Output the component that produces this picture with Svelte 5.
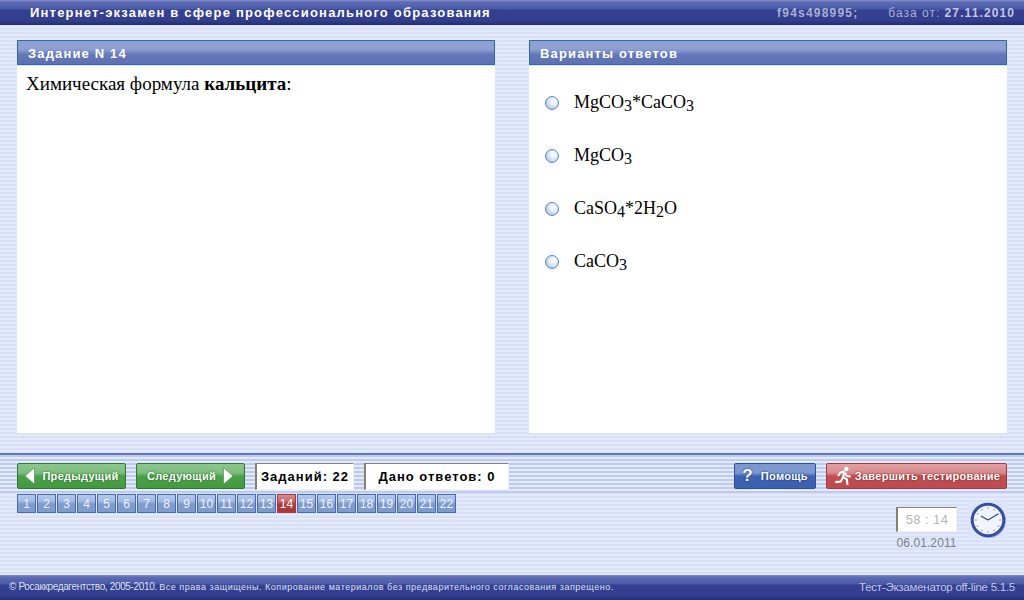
<script>
  const options = [
    [['MgCO', '3'], ['*CaCO', '3']],
    [['MgCO', '3']],
    [['CaSO', '4'], ['*2H', '2'], ['O', '']],
    [['CaCO', '3']]
  ]
  const pages = Array.from({ length: 22 }, (_, i) => i + 1)
  const current = 14
  const ticks = Array.from({ length: 12 }, (_, i) => i * 30)
</script>

<div class="page">
  <header class="topbar">
    <span class="title">Интернет-экзамен в сфере профессионального образования</span>
    <span class="session">f94s498995;</span>
    <span class="base">база от: <b>27.11.2010</b></span>
  </header>

  <main class="columns">
    <section class="card">
      <h2>Задание N 14</h2>
      <div class="body question">Химическая формула <b>кальцита</b>:</div>
    </section>
    <section class="card">
      <h2>Варианты ответов</h2>
      <ul class="body answers">
        {#each options as parts}
          <li>
            <span class="radio"></span>
            <span>{#each parts as p}{p[0]}<sub>{p[1]}</sub>{/each}</span>
          </li>
        {/each}
      </ul>
    </section>
  </main>

  <div class="divider"></div>

  <div class="toolbar">
    <button class="btn green">
      <svg width="12" height="18" viewBox="0 0 12 18"><path d="M10.500 .8v16.400L1 9z" fill="#fff" stroke="#2d7a2d" stroke-width=".5"/></svg>
      Предыдущий
    </button>
    <button class="btn green next">
      Следующий
      <svg width="12" height="18" viewBox="0 0 12 18"><path d="M1.500 .8v16.400L11 9z" fill="#fff" stroke="#2d7a2d" stroke-width=".5"/></svg>
    </button>
    <div class="count tasks">Заданий: 22</div>
    <div class="count given">Дано ответов: 0</div>
    <button class="btn blue help"><span class="q">?</span> Помощь</button>
    <button class="btn red">
      <svg width="20" height="20" viewBox="0 0 17 18">
        <circle cx="11.500" cy="2.600" r="2" fill="#fff"/>
        <path d="M10 5 6 6 4 9M10 5l-1.500 5 3.500 2 .5 5M8.500 10 6.500 14l-5 .5M10 6l2 3 3.500.5" fill="none" stroke="#fff" stroke-width="1.900"/>
      </svg>
      Завершить тестирование
    </button>
  </div>

  <div class="lower">
    <nav class="pager">
      {#each pages as n}
        <span class="cell" class:active={n === current}>{n}</span>
      {/each}
    </nav>
    <div class="clockbox">
      <div class="timewrap">
        <div class="timer">58 : 14</div>
        <div class="date">06.01.2011</div>
      </div>
      <svg class="clock" width="38" height="38" viewBox="0 0 38 38">
        <rect width="38" height="38" fill="#dce5fb"/>
        <circle cx="20" cy="20" r="17" fill="#8f9cc9" opacity=".7"/>
        <circle cx="19" cy="19" r="15.800" fill="#f1f4fc" stroke="#36509f" stroke-width="3"/>
        {#each ticks as a}
          <rect x="18.300" y="6" width="1.400" height="1.800" fill="#9db0dc" transform="rotate({a} 19 19)"/>
        {/each}
        <path d="M19 19 12 15M19 19 29 13" stroke="#2e4a94" stroke-width="1.300" fill="none"/>
      </svg>
    </div>
  </div>

  <footer class="bottombar">
    <span class="copy">© Росаккредагентство, 2005-2010. <small>Все права защищены. Копирование материалов без предварительного согласования запрещено.</small></span>
    <span class="version">Тест-Экзаменатор off-line 5.1.5</span>
  </footer>
</div>

<style>
  :global(body) {
    margin: 0;
  }

  .page {
    width: 1024px;
    height: 600px;
    display: flex;
    flex-direction: column;
    overflow: hidden;
    font-family: "Liberation Sans", Arial, sans-serif;
    background: repeating-linear-gradient(to bottom, #d7e0f7 0 2px, #e3e9fa 2px 4px);
  }

  .topbar,
  .bottombar {
    height: 25px;
    flex: none;
    display: flex;
    align-items: center;
    box-sizing: border-box;
    color: #fff;
    background: linear-gradient(to bottom, #8890cc 0, #5f6db5 2px, #4a59a8 9px, #343f90 10px, #343f90 20px, #2b3580 23px, #232c70 25px);
  }

  .topbar {
    padding: 0 9px 0 30px;
  }

  .title {
    font-size: 13px;
    font-weight: bold;
    letter-spacing: 1.2px;
  }

  .session {
    margin-left: auto;
    font-size: 12px;
    font-weight: bold;
    letter-spacing: 1.2px;
    color: #a9b0d4;
  }

  .base {
    margin-left: 30px;
    font-size: 12px;
    letter-spacing: 1px;
    color: #a9b0d4;
  }

  .base b {
    letter-spacing: 1.1px;
    color: #c3c8e2;
  }

  .columns {
    display: grid;
    grid-template-columns: 478px 478px;
    column-gap: 34px;
    padding: 15px 17px 0;
    height: 393px;
    flex: none;
  }

  .card {
    display: flex;
    flex-direction: column;
    background: #fff;
  }

  h2 {
    margin: 0;
    height: 25px;
    box-sizing: border-box;
    padding: 0 10px;
    line-height: 25px;
    font-size: 13px;
    font-weight: bold;
    letter-spacing: 1.15px;
    color: #fff;
    border: 1px solid #2f6aa5;
    background: linear-gradient(to bottom, #8e9fd3 0, #8e9fd3 8px, #6376b8 14px, #5e71b3 100%);
  }

  .body {
    flex: 1;
    margin: 0;
    border-top: 1px solid #d6e4f7;
  }

  .question {
    padding: 7px 9px;
    font-family: "Liberation Serif", "Times New Roman", serif;
    font-size: 19px;
    color: #000;
    line-height: 21px;
  }

  .answers {
    list-style: none;
    padding: 10px 0 0 16px;
    font-family: "Liberation Serif", "Times New Roman", serif;
    font-size: 18px;
    color: #000;
  }

  .answers li {
    display: flex;
    align-items: center;
    gap: 15px;
    height: 53px;
  }

  sub {
    font-size: 16px;
    line-height: 0;
    vertical-align: -3px;
  }

  .radio {
    width: 14px;
    height: 14px;
    box-sizing: border-box;
    border-radius: 50%;
    border: 1px solid #5f86c2;
    background: radial-gradient(circle at 62% 38%, #fff 0, #e6eefa 35%, #8fb0de 100%);
  }

  .divider {
    height: 2px;
    margin-top: 20px;
    flex: none;
    background: #6179bd;
    box-shadow: 0 3px 0 #a2b2de;
  }

  .toolbar {
    display: flex;
    align-items: flex-start;
    padding: 8px 17px 0;
    flex: none;
    height: 38px;
    box-sizing: border-box;
    background: repeating-linear-gradient(to bottom, #bccbee 0 2px, #e3e9fa 2px 4px);
  }

  .btn {
    height: 26px;
    box-sizing: border-box;
    display: flex;
    align-items: center;
    justify-content: center;
    gap: 6px;
    padding: 0;
    border-radius: 2px;
    font-family: "Liberation Sans", Arial, sans-serif;
    font-size: 11px;
    font-weight: bold;
    letter-spacing: 0.3px;
    color: #fff;
    cursor: pointer;
  }

  .green {
    width: 109px;
    margin-right: 10px;
    border: 1px solid #2d7a2d;
    background: linear-gradient(to bottom, #8dc68d 0, #7dbc7d 9px, #4ba14b 12px, #45993f 100%);
    text-shadow: 0 0 2px #1d5c1d;
  }

  .blue {
    width: 82px;
    margin-left: auto;
    border: 1px solid #2b4f9c;
    background: linear-gradient(to bottom, #7c98cf 0, #7c98cf 9px, #3f63b4 12px, #3c5fb0 100%);
    text-shadow: 0 0 2px #0d256e;
  }

  .q {
    font-size: 17px;
    margin-right: 2px;
  }

  .red {
    width: 181px;
    margin-left: 10px;
    gap: 2px;
    border: 1px solid #a23a3f;
    background: linear-gradient(to bottom, #e3a0a2 0, #d68a8c 9px, #c04e50 12px, #bd4c50 100%);
    text-shadow: 0 0 2px #7a1a1c;
  }

  .count {
    height: 27px;
    box-sizing: border-box;
    display: flex;
    align-items: center;
    justify-content: center;
    background: #fff;
    border: 1px solid #f4f1e6;
    border-top: 1px solid #85826f;
    border-left: 2px solid #85826f;
    font-size: 13px;
    font-weight: bold;
    letter-spacing: 1px;
    color: #000;
  }

  .tasks {
    width: 99px;
    margin-right: 10px;
  }

  .given {
    width: 145px;
  }

  .lower {
    flex: 1;
    display: flex;
    justify-content: space-between;
    padding: 1px 17px 0;
    min-height: 0;
  }

  .pager {
    display: flex;
    gap: 1px;
    height: 19px;
  }

  .cell {
    width: 19px;
    height: 19px;
    box-sizing: border-box;
    display: flex;
    align-items: center;
    justify-content: center;
    font-size: 12px;
    color: #eef2fb;
    border: 1px solid #4a69ae;
    background: linear-gradient(to bottom, #b3c8ea 0, #a3bbe3 6px, #7d9bce 9px, #7f9ccf 100%);
  }

  .active {
    color: #fff;
    border-color: #a23a3f;
    background: linear-gradient(to bottom, #d98a8a 0, #c96c6c 6px, #b23a3c 9px, #ad3638 100%);
  }

  .clockbox {
    display: flex;
    align-items: flex-start;
    gap: 12px;
    margin-top: 7px;
  }

  .timewrap {
    margin-top: 6px;
    width: 61px;
  }

  .timer {
    height: 25px;
    box-sizing: border-box;
    display: flex;
    align-items: center;
    justify-content: center;
    background: #fff;
    border: 1px solid #f4f1e6;
    border-top: 1px solid #85826f;
    border-left: 2px solid #85826f;
    font-size: 13px;
    letter-spacing: 0.4px;
    color: #b5b5b5;
  }

  .date {
    margin-top: 4px;
    font-size: 12px;
    color: #7d8088;
    letter-spacing: 0.1px;
    text-align: center;
  }

  .bottombar {
    justify-content: space-between;
    padding: 0 9px 2px;
    color: #dfe3f5;
  }

  .copy {
    font-size: 10px;
    letter-spacing: -0.35px;
  }

  .copy small {
    font-size: 9px;
    letter-spacing: 0.52px;
  }

  .version {
    font-size: 11.500px;
    letter-spacing: -0.25px;
    color: #c3c9e8;
  }
</style>
